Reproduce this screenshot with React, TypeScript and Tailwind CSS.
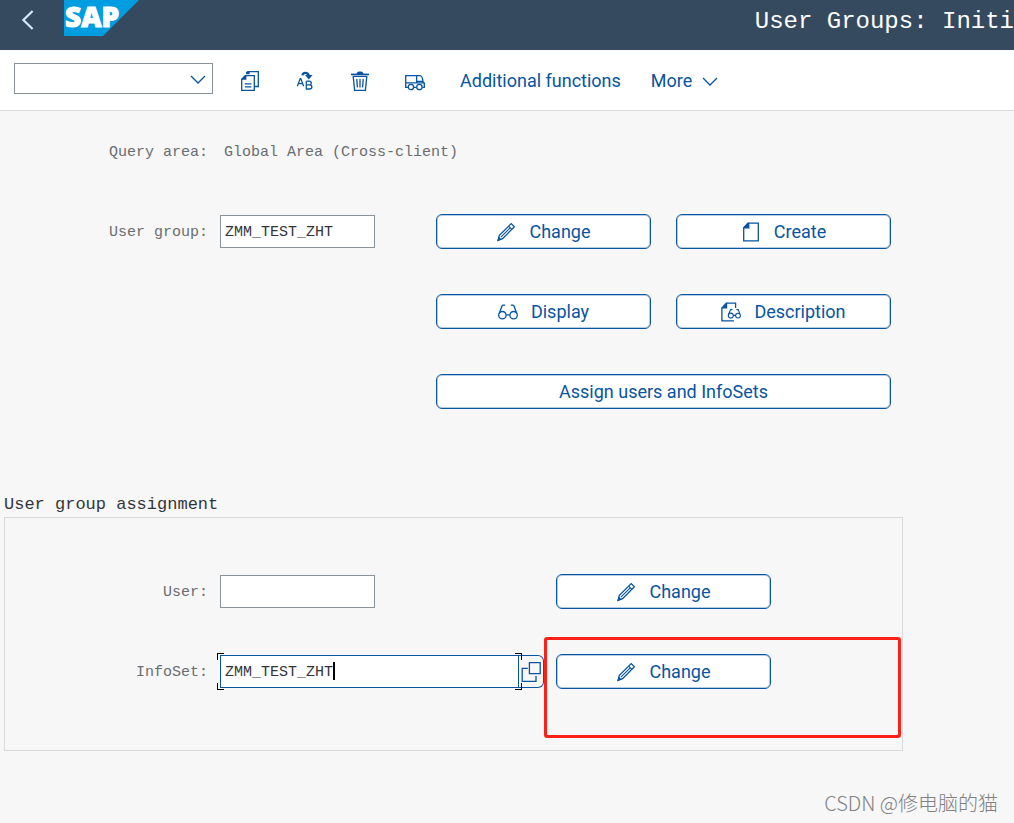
import type { ReactNode } from "react";

const MONO = "font-['Liberation_Mono',monospace]";

function Icon({ children }: { children: ReactNode }) {
  return (
    <svg
      width="20"
      height="20"
      viewBox="0 0 20 20"
      fill="none"
      stroke="currentColor"
      strokeWidth="1.3"
      className="shrink-0"
      aria-hidden="true"
    >
      {children}
    </svg>
  );
}

function CopyIcon() {
  return (
    <Icon>
      <path d="M6.7 3V1.6L8 0.7H18.3V15.5H15" />
      <path d="M5.5 4.6H14.3V19.3H1.7V8.6Z" />
      <path d="M1.2 8.8V8L5 4H6.4V8.8Z" fill="currentColor" stroke="none" />
      <path d="M6.1 3.2V2L8 0.1H9.6V3.2Z" fill="currentColor" stroke="none" />
      <path d="M4.8 12.8H11.4M4.8 15.8H11.4" />
    </Icon>
  );
}

function RenameIcon() {
  return (
    <Icon>
      <path d="M2.4 15.3L5.2 7.6H5.8L8.6 15.3M3.4 12.6H7.6" />
      <path d="M11.3 10.2V18H14.6C17.6 18 17.6 13.9 14.6 13.9H11.3M14.4 13.9C16.9 13.9 16.9 10.2 14.4 10.2H11.3" />
      <path d="M7.4 4.4C7.8 1.2 12.6 0.8 14 4.6" strokeWidth="2.2" />
      <path d="M10 4H17.6L13.8 8.4Z" fill="currentColor" stroke="none" />
    </Icon>
  );
}

function TrashIcon() {
  return (
    <Icon>
      <path d="M1 3.4H19" strokeWidth="1.6" />
      <path d="M6.5 3C7 1.2 8 0.6 10 0.6S13 1.2 13.5 3Z" fill="currentColor" stroke="none" />
      <path d="M3.2 5.4H16.8L15.4 19.3H4.6Z" />
      <path d="M6.8 8L7.4 16.4M10 8V16.4M13.2 8L12.6 16.4" />
    </Icon>
  );
}

function TruckIcon() {
  return (
    <Icon>
      <path d="M3 16.3H0.7V4.6H15C17 4.6 17.6 7 18 10.6L19.3 12V16.3H17.4M8.8 16.3H11.6M0.7 11.8H19M11.6 4.6V11.8M11.6 10.4H18" />
      <circle cx="5.9" cy="16" r="2.7" fill="white" />
      <circle cx="14.4" cy="16" r="2.7" fill="white" />
    </Icon>
  );
}

function PencilIcon() {
  return (
    <Icon>
      <path d="M2 18.4L3.4 13.4L15.2 1.6L18.4 4.8L6.6 16.6Z" />
      <path d="M12.6 4.2L15.8 7.4M4.9 15.1L14.2 5.8" strokeWidth="1.1" />
      <path d="M1.4 19L2.6 14.6L5.6 17.4Z" fill="currentColor" stroke="none" />
    </Icon>
  );
}

function PageIcon() {
  return (
    <Icon>
      <path d="M7 1.2H17.3V18.8H2.7V6Z" />
      <path d="M2.2 6.6V5.6L6.8 0.8H8.4V6.6Z" fill="currentColor" stroke="none" />
    </Icon>
  );
}

function GlassesIcon() {
  return (
    <Icon>
      <circle cx="4.4" cy="13.2" r="3.7" />
      <circle cx="15.6" cy="13.2" r="3.7" />
      <path d="M8.2 12.8H11.8M1.3 11.2L4 4L5 3.2H7.2M18.7 11.2L16 4L15 3.2H12.8" />
    </Icon>
  );
}

function PageGlassesIcon() {
  return (
    <Icon>
      <path d="M5 1.2H14.6V6M0.9 5.8V18.8H13" />
      <path d="M0.4 6.6V5.6L4.8 0.8H6.2V6.6Z" fill="currentColor" stroke="none" />
      <circle cx="9.8" cy="13.6" r="2.5" strokeWidth="1.1" />
      <circle cx="17" cy="13.6" r="2.4" strokeWidth="1.1" />
      <path d="M12.2 13.4H14.6M7.7 12L9.6 7.6H11.4M18.9 12L17.2 7.6H15.4" strokeWidth="1.1" />
    </Icon>
  );
}

function ValueHelpIcon() {
  return (
    <Icon>
      <path d="M8.4 0.7H19.2V11.7H8.4Z" />
      <path d="M6.8 6.3H1.2V19.3H15V14" />
    </Icon>
  );
}

function ChevronDown() {
  return (
    <svg width="16" height="9" viewBox="0 0 16 9" fill="none" stroke="currentColor" strokeWidth="1.3" aria-hidden="true">
      <path d="M1 1L8 8L15 1" />
    </svg>
  );
}

function SapLogo() {
  return (
    <svg width="75" height="36" viewBox="0 0 75 36" role="img" aria-label="SAP" className="overflow-visible">
      <path d="M0 0H75L39 36H0Z" fill="#009de0" />
      <text
        x="1"
        y="27"
        fill="white"
        stroke="white"
        strokeWidth="1"
        className="font-['Open_Sans',sans-serif] text-[28px] font-extrabold"
      >
        SAP
      </text>
    </svg>
  );
}

function ActionButton({ icon, className = "", children }: { icon?: ReactNode; className?: string; children: ReactNode }) {
  return (
    <button
      type="button"
      className={`flex h-[35px] items-center justify-center gap-[13px] rounded-[6px] border border-[#0854a0] bg-white text-lg text-[#0854a0] shadow-[inset_0_0_0_1px_#b5cce2] ${className}`}
    >
      {icon}
      {children}
    </button>
  );
}

const LABEL = `pt-1 text-[15px] text-[#6a6d70] ${MONO}`;

function FieldLabel({ htmlFor, children }: { htmlFor: string; children: ReactNode }) {
  return (
    <label htmlFor={htmlFor} className={`text-right ${LABEL}`}>
      {children}
    </label>
  );
}

const INPUT = `h-[33px] border bg-white px-1 pt-[2px] text-[15px] text-[#32363a] outline-none ${MONO}`;

export default function App() {
  return (
    <div className="relative min-h-screen overflow-hidden bg-[#f7f7f7] font-['Roboto',sans-serif]">
      <header className="flex h-[50px] items-start justify-between bg-[#354a5f]">
        <div className="flex items-start">
          <button type="button" aria-label="Back" className="ml-5 flex h-10 w-11 items-center text-[#d1e8ff]">
            <svg width="14" height="20" viewBox="0 0 14 20" fill="none" stroke="currentColor" strokeWidth="2.2" aria-hidden="true">
              <path d="M12.6 1L3.4 10L12.6 19" />
            </svg>
          </button>
          <SapLogo />
        </div>
        <h1 className={`whitespace-nowrap text-2xl leading-[44px] text-white ${MONO}`}>User Groups: Initi</h1>
      </header>

      <div role="toolbar" className="flex h-[61px] items-center border-b border-[#d9d9d9] bg-white px-[14px] pt-[2px] text-lg text-[#0854a0]">
        <div className="relative mb-[5px] mr-[27px] w-[199px]">
          <select aria-label="Command" className="h-[31px] w-full appearance-none border border-[#89919a] bg-white">
            <option></option>
          </select>
          <span className="pointer-events-none absolute right-[7px] top-3">
            <ChevronDown />
          </span>
        </div>
        <div className="flex items-center gap-[35px]">
          <button type="button" aria-label="Copy"><CopyIcon /></button>
          <button type="button" aria-label="Rename"><RenameIcon /></button>
          <button type="button" aria-label="Delete"><TrashIcon /></button>
          <button type="button" aria-label="Transport"><TruckIcon /></button>
          <div className="flex items-center gap-[30px]">
            <button type="button">Additional functions</button>
            <button type="button" className="flex items-center gap-[10px]">
              More
              <ChevronDown />
            </button>
          </div>
        </div>
      </div>

      <main>
        <div className="grid auto-rows-[35px] grid-cols-[208px_204px_215px_215px] items-center gap-y-[45px] pt-[23px]">
          <span className={`text-right ${LABEL}`}>Query area:</span>
          <span className={`col-span-3 pl-4 ${LABEL}`}>Global Area (Cross-client)</span>

          <FieldLabel htmlFor="user-group">User group:</FieldLabel>
          <input id="user-group" defaultValue="ZMM_TEST_ZHT" className={`ml-3 w-[155px] border-[#89919a] ${INPUT}`} />
          <div className="col-span-2 ml-6 grid w-[455px] grid-cols-2 gap-x-[25px] gap-y-[45px] self-start">
            <ActionButton icon={<PencilIcon />}>Change</ActionButton>
            <ActionButton icon={<PageIcon />}>Create</ActionButton>
            <ActionButton icon={<GlassesIcon />}>Display</ActionButton>
            <ActionButton icon={<PageGlassesIcon />}>Description</ActionButton>
            <ActionButton className="col-span-2">Assign users and InfoSets</ActionButton>
          </div>
        </div>

        <section className="ml-1 mt-[244px] w-[899px]">
          <h2 className={`text-[17px] leading-6 text-[#32363a] ${MONO}`}>User group assignment</h2>
          <div className="grid auto-rows-[35px] grid-cols-[203px_348px_215px] items-center gap-y-[45px] border border-[#d9d9d9] pb-[61px] pt-14">
            <FieldLabel htmlFor="user">User:</FieldLabel>
            <input id="user" className={`ml-3 w-[155px] border-[#89919a] ${INPUT}`} />
            <ActionButton icon={<PencilIcon />}>Change</ActionButton>

            <FieldLabel htmlFor="infoset">InfoSet:</FieldLabel>
            <div className="ml-3 flex">
              <div className="relative w-[299px]">
                <input id="infoset" defaultValue="ZMM_TEST_ZHT" className={`w-full border-[#0854a0] ${INPUT}`} />
                <span className="absolute left-[113px] top-[7px] h-[18px] w-[2px] bg-black" />
                <span className="absolute -left-[3px] -top-[2px] h-[7px] w-[7px] border-l border-t border-black" />
                <span className="absolute -bottom-[2px] -left-[3px] h-[7px] w-[7px] border-b border-l border-black" />
                <span className="absolute -right-[3px] -top-[2px] h-[7px] w-[7px] border-r border-t border-black" />
                <span className="absolute -bottom-[2px] -right-[3px] h-[7px] w-[7px] border-b border-r border-black" />
              </div>
              <button
                type="button"
                aria-label="Value help"
                className="flex h-[33px] w-[25px] items-center justify-center rounded-r-[6px] border border-l-0 border-[#0854a0] text-[#0854a0]"
              >
                <ValueHelpIcon />
              </button>
            </div>
            <div className="relative">
              <ActionButton icon={<PencilIcon />} className="w-full">Change</ActionButton>
              <span className="pointer-events-none absolute -left-3 -top-[17px] h-[101px] w-[357px] rounded-[3px] border-3 border-[#fd2016]" />
            </div>
          </div>
        </section>
      </main>

      <p className="absolute bottom-2 right-4 text-xl leading-6 font-light text-[#808080] font-['Noto_Sans_CJK_SC',sans-serif]">
        CSDN @修电脑的猫
      </p>
    </div>
  );
}
